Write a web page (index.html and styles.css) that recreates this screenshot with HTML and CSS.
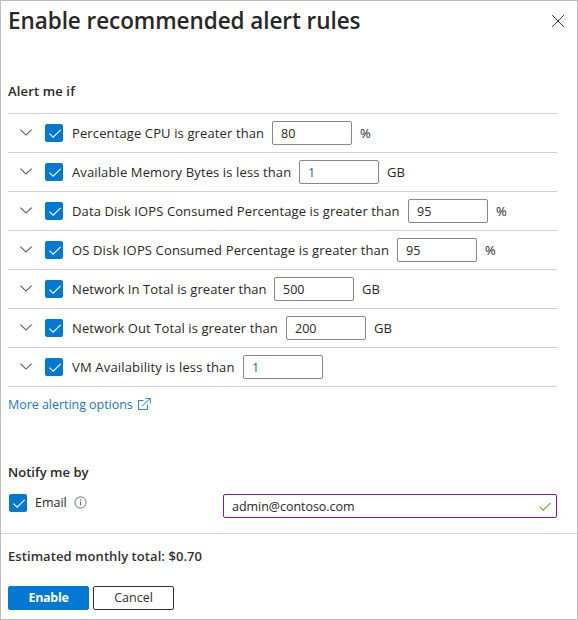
FILE: index.html
```html
<!DOCTYPE html>
<html lang="en">
<head>
<meta charset="utf-8">
<title>Enable recommended alert rules</title>
<link rel="stylesheet" href="styles.css">
</head>
<body>
<svg width="0" height="0" class="defs">
<symbol id="chev" viewBox="0 0 12 7"><path d="M.4.6 6 6.1 11.6.6" fill="none" stroke="#555" stroke-width="1.1"/></symbol>
<symbol id="tick" viewBox="0 0 12 9"><path d="M.5 4.6 4.2 8.2 11.6.8" fill="none" stroke="currentColor" stroke-width="1.1"/></symbol>
</svg>
<main class="panel">
<header class="header"><h1 class="title"><span>Enable recommended alert rules</span></h1>
<svg class="close" width="12" height="12" viewBox="0 0 12 12"><path d="M.2.2 11.8 11.8M11.8.2.2 11.8" stroke="#333" stroke-width="1"/></svg></header>
<h2 class="heading alert-heading">Alert me if</h2>
<ul class="rules">
<li class="rule"><svg class="chevron"><use href="#chev"/></svg><span class="check"><svg><use href="#tick"/></svg></span><span class="label cpu">Percentage CPU is greater than</span><span class="field">80</span><span class="unit">%</span></li>
<li class="rule"><svg class="chevron"><use href="#chev"/></svg><span class="check"><svg><use href="#tick"/></svg></span><span class="label memory">Available Memory Bytes is less than</span><span class="field changed">1</span><span class="unit">GB</span></li>
<li class="rule"><svg class="chevron"><use href="#chev"/></svg><span class="check"><svg><use href="#tick"/></svg></span><span class="label data-disk">Data Disk IOPS Consumed Percentage is greater than</span><span class="field">95</span><span class="unit">%</span></li>
<li class="rule"><svg class="chevron"><use href="#chev"/></svg><span class="check"><svg><use href="#tick"/></svg></span><span class="label os-disk">OS Disk IOPS Consumed Percentage is greater than</span><span class="field">95</span><span class="unit">%</span></li>
<li class="rule"><svg class="chevron"><use href="#chev"/></svg><span class="check"><svg><use href="#tick"/></svg></span><span class="label net-in">Network In Total is greater than</span><span class="field">500</span><span class="unit">GB</span></li>
<li class="rule"><svg class="chevron"><use href="#chev"/></svg><span class="check"><svg><use href="#tick"/></svg></span><span class="label net-out">Network Out Total is greater than</span><span class="field">200</span><span class="unit">GB</span></li>
<li class="rule"><svg class="chevron"><use href="#chev"/></svg><span class="check"><svg><use href="#tick"/></svg></span><span class="label vm">VM Availability is less than</span><span class="field changed">1</span></li>
</ul>
<a class="more"><span>More alerting options</span><svg width="13" height="12" viewBox="0 0 13 12" fill="none" stroke="#2b83d0" stroke-width="1"><path d="M5.5 2.5h-5v9h9v-5M4.2 8 12 .5M7.5.5h4.9v4.9"/></svg></a>
<h2 class="heading notify-heading">Notify me by</h2>
<div class="notify"><span class="check"><svg><use href="#tick"/></svg></span><span class="email-label">Email</span>
<svg class="info" width="13" height="13" viewBox="0 0 13 13"><circle cx="6.5" cy="6.5" r="5.6" fill="none" stroke="#707070"/><path d="M6.5 5.5v4M6.5 3.3v1.2" stroke="#707070"/></svg>
<div class="email-field"><span>admin@contoso.com</span><svg class="valid"><use href="#tick"/></svg></div></div>
<footer class="footer"><p class="total">Estimated monthly total: $0.70</p>
<div class="actions"><button class="button primary">Enable</button><button class="button">Cancel</button></div></footer>
</main>
</body>
</html>
```
FILE: styles.css
```css
* { box-sizing: border-box; }
body { margin: 0; font-family: "Open Sans", "Noto Sans", sans-serif; font-size: 12.5px; color: #292827; background: #fff; }
.defs { display: none; }
.panel { width: 578px; height: 620px; border: 1px solid #bdbdbd; overflow: hidden; }
.header { display: flex; justify-content: space-between; align-items: flex-start; height: 78px; padding: 5px 13px 0 7px; }
.title { margin: 0; font-size: 22.5px; line-height: 30px; font-weight: 600; letter-spacing: -.07px; white-space: nowrap; }
.close { margin-top: 9px; }
.heading { margin: 0; padding-left: 7px; font-size: 13px; line-height: 24px; font-weight: 600; letter-spacing: .14px; }
.alert-heading { height: 34px; }
.rules { list-style: none; margin: 0 20px 0 7px; padding: 0; border-top: 1px solid #d2d0ce; }
.rule { display: flex; align-items: center; height: 39px; padding-left: 12px; border-bottom: 1px solid #d2d0ce; white-space: nowrap; }
.chevron { width: 12px; height: 7px; margin: 0 13px 2px 0; }
.check { display: flex; align-items: center; justify-content: center; flex: none; width: 18px; height: 18px; border-radius: 2px; background: #0078d4; color: #fff; }
.check svg { width: 12px; height: 9px; margin-left: 1px; }
.label { margin: 0 8px 0 9px; font-size: 13px; letter-spacing: .12px; }
.cpu { width: 192px; }
.memory { width: 219px; }
.data-disk { width: 328px; }
.os-disk { width: 317px; letter-spacing: .14px; }
.net-in { width: 194px; letter-spacing: .09px; }
.net-out { width: 206px; letter-spacing: .09px; }
.vm { width: 163px; letter-spacing: .17px; }
.field { width: 80px; height: 24px; padding-left: 8px; border: 1px solid #8a8886; border-radius: 2px; line-height: 23px; }
.changed { color: #315f8a; }
.unit { margin-left: 8px; font-size: 13px; }
.more { display: flex; align-items: center; gap: 5px; height: 35px; padding-left: 7px; color: #1a78cb; letter-spacing: -.04px; }
.more svg { margin-bottom: 2px; }
.notify-heading { margin-top: 38px; letter-spacing: .02px; }
.notify { display: flex; align-items: flex-start; height: 49px; padding: 10px 20px 0 8px; }
.email-label { line-height: 18px; margin-left: 8px; }
.info { margin: 2px 0 0 7px; }
.email-field { display: flex; align-items: center; justify-content: space-between; width: 334px; height: 24px; margin-left: auto; padding: 0 5px 0 8px; border: 1px solid #881798; border-radius: 2px; letter-spacing: -.04px; }
.valid { width: 12px; height: 9px; color: #6bb12d; }
.footer { border-top: 1px solid #d8d8d8; padding: 11px 7px 0; }
.total { margin: 0; height: 41px; font-size: 13px; line-height: 22px; font-weight: 600; letter-spacing: .07px; color: #323130; }
.actions { display: flex; gap: 4px; }
.button { width: 81px; height: 24px; padding: 0; font: 500 12.5px/20px "Open Sans", sans-serif; color: #323130; background: #fff; border: 1px solid #323130; border-radius: 2px; }
.primary { color: #fff; background: #0078d4; border-color: #0078d4; font-weight: 700; letter-spacing: -.3px; }
```
